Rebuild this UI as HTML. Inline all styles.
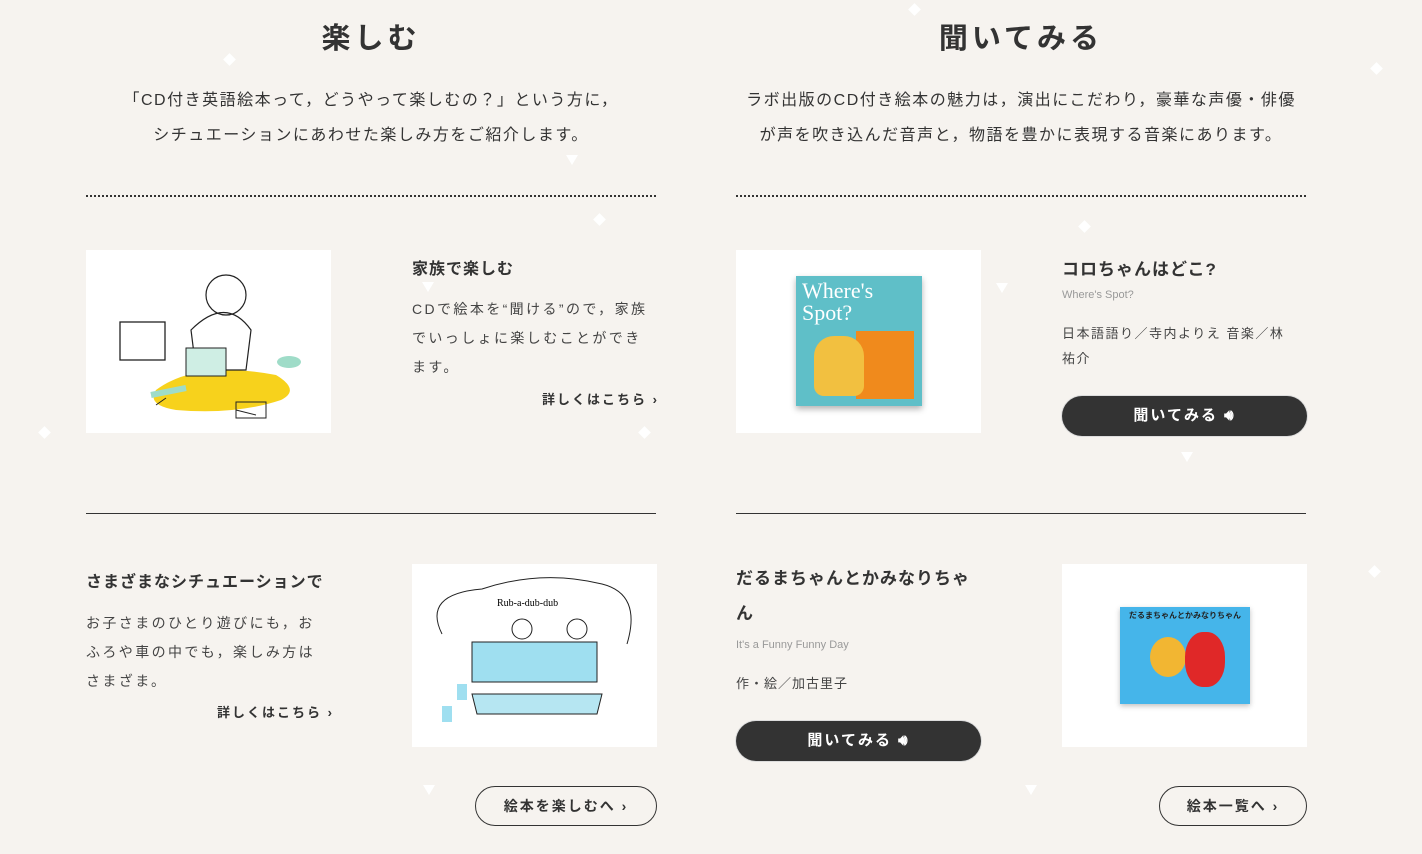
<!DOCTYPE html>
<html><head><meta charset="utf-8"><style>
*{margin:0;padding:0;box-sizing:border-box}
body{width:1422px;height:854px;background:#f6f3ef;font-family:"Liberation Sans","Noto Sans CJK JP",sans-serif;color:#333;position:relative;overflow:hidden}
.a{position:absolute}
h2{position:absolute;font-size:29px;font-weight:bold;letter-spacing:4px;color:#333;text-align:center;width:570px}
.intro{position:absolute;width:570px;text-align:center;font-size:16px;line-height:35px;letter-spacing:1.5px;color:#333}
.dot{position:absolute;height:0;border-top:2px dotted #333;width:570px}
.line{position:absolute;height:1px;background:#333;width:570px}
.img{position:absolute;background:#fff;width:245px;height:183px;overflow:hidden}
.t{position:absolute;font-size:16px;font-weight:bold;letter-spacing:1px}
.p{position:absolute;font-size:14px;line-height:29px;letter-spacing:2.4px;color:#444;white-space:nowrap}
.more{position:absolute;font-size:13px;font-weight:bold;letter-spacing:2px}
.sub{position:absolute;font-size:11px;color:#999}
.btn{position:absolute;width:245px;height:40px;background:#333;border-radius:20px;color:#fff;font-weight:bold;font-size:15px;text-align:center;line-height:40px;letter-spacing:2px;box-shadow:0 0 0 1px #ddd}
.ob{position:absolute;height:40px;border:1px solid #333;border-radius:20px;font-size:14px;font-weight:bold;text-align:center;line-height:38px;letter-spacing:2px}
.tri{position:absolute;width:0;height:0;border-left:6px solid transparent;border-right:6px solid transparent;border-top:10px solid #fff}
.dia{position:absolute;width:9px;height:9px;background:#fff;transform:rotate(45deg)}
</style></head><body>
<div class="tri" style="left:566px;top:155px"></div>
<div class="tri" style="left:422px;top:282px"></div>
<div class="tri" style="left:1181px;top:452px"></div>
<div class="tri" style="left:423px;top:785px"></div>
<div class="tri" style="left:1025px;top:785px"></div>
<div class="tri" style="left:996px;top:283px"></div>
<div class="dia" style="left:595px;top:215px"></div>
<div class="dia" style="left:640px;top:428px"></div>
<div class="dia" style="left:40px;top:428px"></div>
<div class="dia" style="left:910px;top:5px"></div>
<div class="dia" style="left:225px;top:55px"></div>
<div class="dia" style="left:1080px;top:222px"></div>
<div class="dia" style="left:1372px;top:64px"></div>
<div class="dia" style="left:1370px;top:567px"></div>

<h2 style="left:86px;top:15px">楽しむ</h2>
<h2 style="left:736px;top:15px">聞いてみる</h2>
<div class="intro" style="left:86px;top:83px">「CD付き英語絵本って，どうやって楽しむの？」という方に，<br>シチュエーションにあわせた楽しみ方をご紹介します。</div>
<div class="intro" style="left:736px;top:83px">ラボ出版のCD付き絵本の魅力は，演出にこだわり，豪華な声優・俳優<br>が声を吹き込んだ音声と，物語を豊かに表現する音楽にあります。</div>
<div class="dot" style="left:86px;top:195px"></div>
<div class="dot" style="left:736px;top:195px"></div>

<div class="img" style="left:86px;top:250px"><svg width="245" height="183">
<path d="M70 140 Q110 110 190 125 Q215 140 195 150 Q150 165 90 160 Q60 155 70 140Z" fill="#f7d21c"/>
<circle cx="140" cy="45" r="20" fill="none" stroke="#222" stroke-width="1.2"/>
<path d="M105 80 Q140 45 165 80 L160 120 L110 120Z" fill="none" stroke="#222" stroke-width="1.2"/>
<rect x="34" y="72" width="45" height="38" fill="none" stroke="#222" stroke-width="1.3"/>
<rect x="100" y="98" width="40" height="28" fill="#cfeee4" stroke="#222"/>
<path d="M80 148 L70 155 M150 160 L170 165" stroke="#222"/>
<rect x="150" y="152" width="30" height="16" fill="none" stroke="#222"/>
<ellipse cx="203" cy="112" rx="12" ry="6" fill="#9fdcc8"/>
<path d="M65 145 L100 138" stroke="#9fdcc8" stroke-width="6"/>
</svg></div>
<div class="t" style="left:412px;top:255px">家族で楽しむ</div>
<div class="p" style="left:412px;top:295px">CDで絵本を“聞ける”ので，家族<br>でいっしょに楽しむことができ<br>ます。</div>
<div class="more" style="left:542px;top:389px">詳しくはこちら ›</div>

<div class="img" style="left:736px;top:250px"><div class="a" style="left:60px;top:26px;width:126px;height:130px;background:#5fbfc8;box-shadow:0 3px 6px rgba(0,0,0,.3);font-family:'Liberation Serif',serif;color:#fff;font-size:22px;line-height:22px;padding:4px 6px">Where's<br>Spot?
<div class="a" style="left:60px;top:55px;width:58px;height:68px;background:#f08a1c"></div>
<div class="a" style="left:18px;top:60px;width:50px;height:60px;background:#f2c040;border-radius:20px 20px 10px 10px"></div></div></div>
<div class="t" style="left:1062px;top:255px;font-size:17px">コロちゃんはどこ?</div>
<div class="sub" style="left:1062px;top:289px">Where's Spot?</div>
<div class="p" style="left:1062px;top:321px;font-size:13px;line-height:25px;letter-spacing:1.5px">日本語語り／寺内よりえ 音楽／林<br>祐介</div>
<div class="btn" style="left:1062px;top:396px">聞いてみる 🔊︎</div>

<div class="line" style="left:86px;top:513px"></div>
<div class="line" style="left:736px;top:513px"></div>

<div class="t" style="left:86px;top:568px">さまざまなシチュエーションで</div>
<div class="p" style="left:86px;top:609px">お子さまのひとり遊びにも，お<br>ふろや車の中でも，楽しみ方は<br>さまざま。</div>
<div class="more" style="left:217px;top:702px">詳しくはこちら ›</div>
<div class="img" style="left:412px;top:564px"><svg width="245" height="183">
<path d="M30 70 Q10 30 70 25 Q130 5 190 20 Q230 30 215 80" fill="none" stroke="#222"/>
<rect x="60" y="78" width="125" height="40" fill="#9fdff0" stroke="#222"/>
<circle cx="110" cy="65" r="10" fill="none" stroke="#222"/><circle cx="165" cy="65" r="10" fill="none" stroke="#222"/>
<path d="M60 130 L190 130 L185 150 L65 150Z" fill="#b6e6f2" stroke="#222"/>
<text x="85" y="42" font-size="10" font-family="Liberation Serif">Rub-a-dub-dub</text>
<rect x="45" y="120" width="10" height="16" fill="#9fdff0"/><rect x="30" y="142" width="10" height="16" fill="#9fdff0"/>
</svg></div>

<div class="t" style="left:736px;top:561px;font-size:17px;line-height:35px;width:245px">だるまちゃんとかみなりちゃ<br>ん</div>
<div class="sub" style="left:736px;top:639px">It's a Funny Funny Day</div>
<div class="p" style="left:736px;top:669px;font-size:13px;letter-spacing:1px">作・絵／加古里子</div>
<div class="btn" style="left:736px;top:721px">聞いてみる 🔊︎</div>
<div class="img" style="left:1062px;top:564px"><div class="a" style="left:58px;top:43px;width:130px;height:97px;background:#45b5ea;box-shadow:0 2px 5px rgba(0,0,0,.25)">
<div class="a" style="left:0;top:3px;width:130px;text-align:center;font-size:8px;font-weight:bold;color:#222">だるまちゃんとかみなりちゃん</div>
<div class="a" style="left:30px;top:30px;width:36px;height:40px;background:#f2b632;border-radius:50%"></div>
<div class="a" style="left:65px;top:25px;width:40px;height:55px;background:#e02828;border-radius:45%"></div></div></div>

<div class="ob" style="left:475px;top:786px;width:182px">絵本を楽しむへ ›</div>
<div class="ob" style="left:1159px;top:786px;width:148px">絵本一覧へ ›</div>
</body></html>
